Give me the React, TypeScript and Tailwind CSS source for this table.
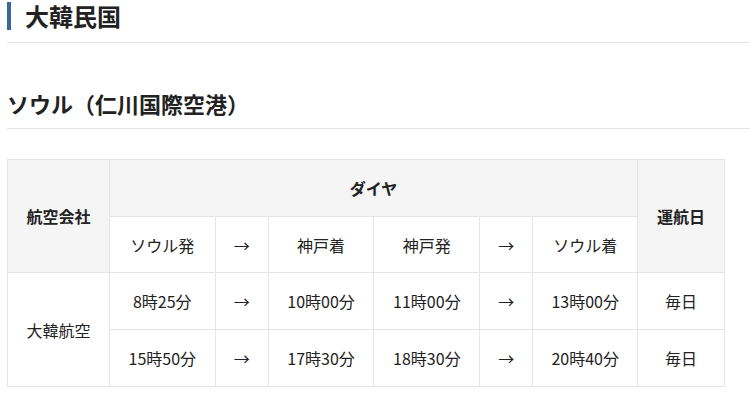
import React from 'react';

const ROWS = [
  ['8時25分', '→', '10時00分', '11時00分', '→', '13時00分', '毎日'],
  ['15時50分', '→', '17時30分', '18時30分', '→', '20時40分', '毎日'],
];

const th = 'border border-[#e5e5e5] bg-[#f5f5f5] font-bold';
const td = 'border border-[#e5e5e5] font-normal';

export default function App() {
  return (
    <div className="min-h-screen bg-white pl-[7px] text-[#222] font-['Noto_Sans_CJK_JP','Noto_Sans',sans-serif] overflow-hidden">
      {/* 国 */}
      <div className="mt-[2px] border-b border-[#e3e3e3] pb-[12px]">
        <h2 className="border-l-4 border-[#3a6b98] pl-[14px] text-[24px] font-bold leading-[28px]">大韓民国</h2>
      </div>

      {/* 空港 */}
      <div className="mt-[46px] border-b border-[#e3e3e3] pb-[11px]">
        <h3 className="text-[22px] font-bold leading-[28px]">ソウル（仁川国際空港）</h3>
      </div>

      <table className="mt-[30px] w-[718px] border-collapse text-center text-[16px] leading-[24px]">
        <colgroup>
          <col className="w-[102px]" />
          <col className="w-[106px]" />
          <col className="w-[53px]" />
          <col className="w-[106px]" />
          <col className="w-[106px]" />
          <col className="w-[53px]" />
          <col className="w-[105px]" />
          <col className="w-[87px]" />
        </colgroup>
        <thead>
          <tr className="h-[57px]">
            <th rowSpan={2} className={th}>航空会社</th>
            <th colSpan={6} className={th}>ダイヤ</th>
            <th rowSpan={2} className={th}>運航日</th>
          </tr>
          <tr className="h-[56px]">
            {['ソウル発', '→', '神戸着', '神戸発', '→', 'ソウル着'].map((t, i) => (
              <th key={i} className={td}>{t}</th>
            ))}
          </tr>
        </thead>
        <tbody>
          {ROWS.map((r, ri) => (
            <tr key={ri} className="h-[57px]">
              {ri === 0 && <td rowSpan={2} className={td}>大韓航空</td>}
              {r.map((t, i) => (
                <td key={i} className={td}>{t}</td>
              ))}
            </tr>
          ))}
        </tbody>
      </table>
    </div>
  );
}
